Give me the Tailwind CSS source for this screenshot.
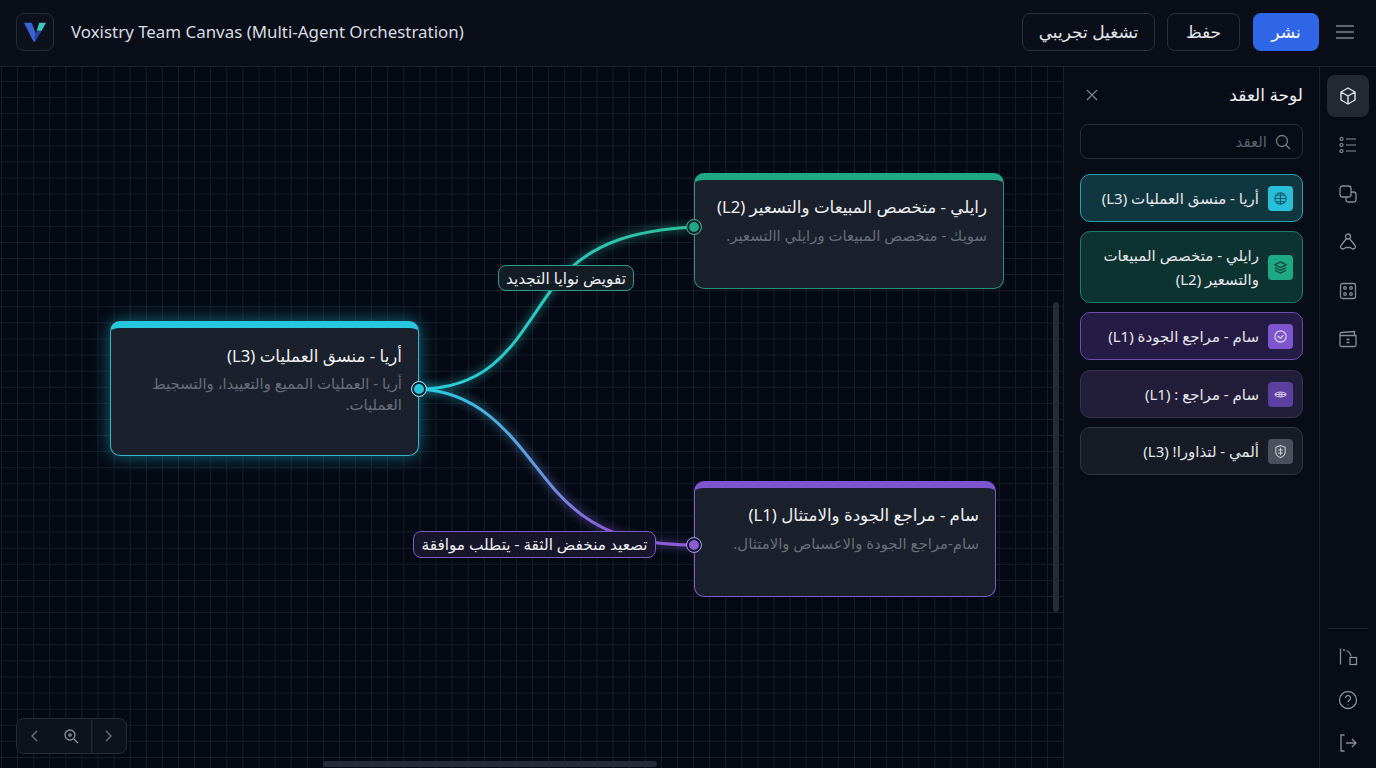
<!DOCTYPE html>
<html lang="ar">
<head>
  <meta charset="UTF-8">
  <meta name="viewport" content="width=device-width, initial-scale=1">
  <title>Voxistry Team Canvas</title>
  <script src="https://cdn.jsdelivr.net/npm/@tailwindcss/browser@4"></script>
</head>
<body class="h-[768px] w-[1376px] overflow-hidden bg-[#060a14] font-['Noto_Sans','DejaVu_Sans',sans-serif] text-[#e6e9ee]">

  <!-- top bar -->
  <header class="flex h-[67px] items-center border-b border-[#1c222d] bg-[#0a0e18] pb-[3px] pl-4 pr-[22px]">
    <div class="flex h-[38px] w-[38px] items-center justify-center rounded-lg border border-[#252b37] bg-[#0c111c]">
      <svg width="22" height="20" viewBox="0 0 22 20">
        <path d="M0 .7H7.600L13 14.500 11 19.700H9.500Z" fill="#3b63d8"/>
        <path d="M12.700 9H17.700L11 19.700 10.600 14.500Z" fill="#2f3f9f"/>
        <path d="M15.300 .7H22L17.700 8.700H12.700Z" fill="#3cc8c0"/>
      </svg>
    </div>
    <h1 class="ml-[17px] text-[16.900px] text-[#d8dce3]">Voxistry Team Canvas (Multi-Agent Orchestration)</h1>
    <div class="ml-auto flex items-center text-[17px]" dir="ltr">
      <button dir="rtl" class="h-[38px] w-[133px] rounded-lg border border-[#2a303b] text-[#e3e6eb]">تشغيل تجريبي</button>
      <button dir="rtl" class="ml-3 h-[38px] w-[73px] rounded-lg border border-[#2a303b] text-[#e3e6eb]">حفظ</button>
      <button dir="rtl" class="ml-[13px] h-[38px] w-[66px] rounded-lg bg-[#2f66e8] text-white">نشر</button>
      <svg class="ml-[17px]" width="18" height="14" viewBox="0 0 18 14" fill="none" stroke="#7b828e" stroke-width="1.300">
        <path d="M0 1h18M0 7h18M0 13h18"/>
      </svg>
    </div>
  </header>

  <div class="flex h-[701px]">
    <!-- canvas -->
    <main class="relative w-[1063px] overflow-hidden bg-[#050913] bg-[linear-gradient(#151e2a_1px,transparent_1px),linear-gradient(90deg,#151e2a_1px,transparent_1px)] bg-[size:16.100px_16.100px] bg-[position:1px_14px]">
      <svg class="absolute inset-0" width="1063" height="701" viewBox="0 67 1063 701" fill="none">
        <defs>
          <linearGradient id="edgeTop" gradientUnits="userSpaceOnUse" x1="419" y1="389" x2="694" y2="227">
            <stop offset="0" stop-color="#27cfe0"/>
            <stop offset="1" stop-color="#2fc09a"/>
          </linearGradient>
          <linearGradient id="edgeBottom" gradientUnits="userSpaceOnUse" x1="419" y1="389" x2="694" y2="545">
            <stop offset="0" stop-color="#27cfe0"/>
            <stop offset=".5" stop-color="#6f8fe0"/>
            <stop offset=".75" stop-color="#8b5cd6"/>
          </linearGradient>
          <filter id="glow" x="-20%" y="-20%" width="140%" height="140%">
            <feGaussianBlur stdDeviation="5"/>
          </filter>
        </defs>
        <path d="M419 389C500 389 520 330 555 285 590 240 640 230 694 227" stroke="url(#edgeTop)" stroke-width="5" opacity=".5" filter="url(#glow)"/>
        <path d="M419 389C490 392 520 450 555 490 590 530 630 545 694 545" stroke="url(#edgeBottom)" stroke-width="5" opacity=".5" filter="url(#glow)"/>
        <path d="M419 389C500 389 520 330 555 285 590 240 640 230 694 227" stroke="url(#edgeTop)" stroke-width="3"/>
        <path d="M419 389C490 392 520 450 555 490 590 530 630 545 694 545" stroke="url(#edgeBottom)" stroke-width="3"/>
      </svg>

      <!-- node: Aria -->
      <article dir="rtl" class="absolute left-[110px] top-[254px] h-[135px] w-[309px] rounded-[10px] border border-[#35b6c8] border-t-[7px] border-t-[#27c8dd] bg-[#1a202c] py-[16px] pl-4 pr-4 shadow-[0_0_18px_#1fb6cf90]">
        <h2 class="text-[16.700px] leading-6 text-[#eef0f3]">أريا - منسق العمليات (L3)</h2>
        <p class="mt-[5px] text-[14.900px] leading-[21px] text-[#686e79]">أريا - العمليات المميع والتعييدا، والتسجيط العمليات.</p>
      </article>
      <span class="absolute left-[411px] top-[314px] h-4 w-4 rounded-full border-[1.500px] border-[#8fdde9] bg-[#27c8dd] shadow-[inset_0_0_0_2px_#0b1a24]"></span>

      <!-- node: Riley -->
      <article dir="rtl" class="absolute left-[694px] top-[106px] h-[116px] w-[310px] rounded-[10px] border border-[#2b8f78] border-t-[7px] border-t-[#1ea883] bg-[#1a202c] pb-[14px] pl-4 pr-4 pt-[15px]">
        <h2 class="text-[16.700px] leading-6 text-[#eef0f3]">رايلي - متخصص المبيعات والتسعير (L2)</h2>
        <p class="mt-[6px] text-[14.900px] leading-[21px] text-[#686e79]">سويك - متخصص المبيعات ورايلي االتسعير.</p>
      </article>
      <span class="absolute left-[686px] top-[152px] h-4 w-4 rounded-full border-[1.500px] border-[#4aa68e] bg-[#1ea883] shadow-[inset_0_0_0_2px_#0b1a24]"></span>

      <!-- node: Sam -->
      <article dir="rtl" class="absolute left-[694px] top-[414px] h-[116px] w-[302px] rounded-[10px] border border-[#7a5cc4] border-t-[7px] border-t-[#7d55cf] bg-[#1a202c] pb-[14px] pl-4 pr-4 pt-[15px]">
        <h2 class="text-[16.700px] leading-6 text-[#eef0f3]">سام - مراجع الجودة والامتثال (L1)</h2>
        <p class="mt-[6px] text-[14.900px] leading-[21px] text-[#686e79]">سام-مراجع الجودة والاعسباص والامتثال.</p>
      </article>
      <span class="absolute left-[686px] top-[470px] h-4 w-4 rounded-full border-[1.500px] border-[#a78be0] bg-[#8b5cd6] shadow-[inset_0_0_0_2px_#0b1a24]"></span>

      <!-- edge labels -->
      <span dir="rtl" class="absolute left-[498px] top-[198px] flex h-[26px] w-[136px] items-center justify-center rounded-lg border border-[#2f9c87] bg-[#141c26] text-[15.300px] text-[#eef0f3]">تفويض نوايا التجديد</span>
      <span dir="rtl" class="absolute left-[413px] top-[464px] flex h-[27px] w-[243px] items-center justify-center rounded-lg border border-[#7a5cc4] bg-[#17152a] text-[15.300px] text-[#eef0f3]">تصعيد منخفض الثقة - يتطلب موافقة</span>

      <!-- zoom control -->
      <div class="absolute bottom-[14px] left-4 flex h-9 w-[111px] items-center rounded-lg border border-[#252b37] bg-[#0d121c]">
        <div class="flex w-[74px] items-center justify-between pl-3 pr-3">
          <svg width="10" height="12" viewBox="0 0 10 12" fill="none" stroke="#6f7681" stroke-width="1.300"><path d="M8 1L3 6l5 5"/></svg>
          <svg width="16" height="16" viewBox="0 0 16 16" fill="none" stroke="#8b919b" stroke-width="1.300"><circle cx="7" cy="7" r="5"/><circle cx="7" cy="7" r="1.200"/><path d="M11 11l4 4"/></svg>
        </div>
        <div class="flex h-full flex-1 items-center justify-center border-l border-[#252b37]">
          <svg width="10" height="12" viewBox="0 0 10 12" fill="none" stroke="#6f7681" stroke-width="1.300"><path d="M2 1l5 5-5 5"/></svg>
        </div>
      </div>

      <!-- scrollbars -->
      <div class="absolute left-[1053px] top-[235px] h-[310px] w-[6px] rounded-full bg-[#262c37]"></div>
      <div class="absolute left-[323px] top-[694px] h-[6px] w-[334px] rounded-full bg-[#262c37]"></div>
    </main>

    <!-- node palette -->
    <aside class="w-[256px] border-l border-[#1c222d] bg-[#080c16] pl-4 pr-4" dir="rtl">
      <div class="flex h-[56px] items-center justify-between">
        <h2 class="text-[17px] text-[#eef0f3]">لوحة العقد</h2>
        <svg class="ml-[6px]" width="12" height="12" viewBox="0 0 12 12" fill="none" stroke="#7b828e" stroke-width="1.300"><path d="M1 1l10 10M11 1L1 11"/></svg>
      </div>
      <div class="mt-px flex h-[35px] items-center gap-2 rounded-lg border border-[#252b37] pr-[11px] text-[15px] text-[#5c626d]">
        <svg width="16" height="16" viewBox="0 0 16 16" fill="none" stroke="#767c87" stroke-width="1.300"><circle cx="7" cy="7" r="5.500"/><path d="M11 11l4 4"/></svg>
        <span>العقد</span>
      </div>
      <ul class="mt-[15px] flex flex-col gap-[9px] text-[15px] leading-[24px] text-[#e3e6eb]">
        <li class="flex h-12 items-center gap-[9px] rounded-[10px] border border-[#2f9fb0] bg-[#10363f] px-[9px]">
          <span class="flex h-[25px] w-[25px] shrink-0 items-center justify-center rounded bg-[#27c0d8]">
            <svg width="15" height="15" viewBox="0 0 16 16" fill="none" stroke="#0f5a68" stroke-width="1.200"><circle cx="8" cy="8" r="6"/><path d="M2 8h12M8 2v12M4 4.500h8M4 11.500h8"/></svg>
          </span>
          <span>أريا - منسق العمليات (L3)</span>
        </li>
        <li class="flex h-[72px] items-center gap-[9px] rounded-[10px] border border-[#227a65] bg-[#0d3330] px-[9px]">
          <span class="flex h-[25px] w-[25px] shrink-0 items-center justify-center rounded bg-[#1ea883]">
            <svg width="15" height="15" viewBox="0 0 16 16" fill="none" stroke="#0b3e33" stroke-width="1.300"><path d="M8 2l6 3-6 3-6-3zM2 8l6 3 6-3M2 11l6 3 6-3"/></svg>
          </span>
          <span>رايلي - متخصص المبيعات والتسعير (L2)</span>
        </li>
        <li class="flex h-12 items-center gap-[9px] rounded-[10px] border border-[#6b4fb0] bg-[#261b44] px-[9px]">
          <span class="flex h-[25px] w-[25px] shrink-0 items-center justify-center rounded bg-[#7d55cf]">
            <svg width="15" height="15" viewBox="0 0 16 16" fill="none" stroke="#e0d5f5" stroke-width="1.200"><circle cx="8" cy="8" r="6"/><path d="M5 7.500l3 2.500 3-3.500"/></svg>
          </span>
          <span>سام - مراجع الجودة (L1)</span>
        </li>
        <li class="mt-px flex h-12 items-center gap-[9px] rounded-[10px] border border-[#3a3350] bg-[#221d38] px-[9px]">
          <span class="flex h-[25px] w-[25px] shrink-0 items-center justify-center rounded bg-[#5c3f9e]">
            <svg width="15" height="15" viewBox="0 0 16 16" fill="none" stroke="#cfc4e8" stroke-width="1.100"><path d="M2 8c2-3.500 10-3.500 12 0-2 3.500-10 3.500-12 0zM2 8h12"/><circle cx="8" cy="8" r="1.800"/></svg>
          </span>
          <span>سام - مراجع : (L1)</span>
        </li>
        <li class="flex h-12 items-center gap-[9px] rounded-[10px] border border-[#303640] bg-[#161b25] px-[9px]">
          <span class="flex h-[25px] w-[25px] shrink-0 items-center justify-center rounded bg-[#4b515c]">
            <svg width="15" height="15" viewBox="0 0 16 16" fill="none" stroke="#c9ced6" stroke-width="1.100"><path d="M8 1.500l5 2v5c0 3-2.500 5-5 6-2.500-1-5-3-5-6v-5zM8 4v8M5.500 6.500h5M5.500 9.500h5"/></svg>
          </span>
          <span>ألمي - لتذاورا! (L3)</span>
        </li>
      </ul>
    </aside>

    <!-- icon rail -->
    <nav class="flex w-[57px] flex-col items-center border-l border-[#1c222d] bg-[#080c16] pb-[15px] pt-2 text-[#878d97]">
      <div class="flex h-[42px] w-[42px] items-center justify-center rounded-lg bg-[#232833] text-[#e3e6eb]">
        <svg width="20" height="20" viewBox="0 0 20 20" fill="none" stroke="currentColor" stroke-width="1.400" stroke-linejoin="round"><path d="M10 2l7 4v8l-7 4-7-4V6zM3 6l7 4 7-4M10 10v8"/></svg>
      </div>
      <div class="mt-[18px] flex flex-col items-center gap-[28.500px]">
        <svg width="20" height="20" viewBox="0 0 20 20" fill="none" stroke="currentColor" stroke-width="1.200"><circle cx="3.500" cy="4" r="1.500"/><circle cx="3.500" cy="10" r="1.500"/><circle cx="3.500" cy="16" r="1.500"/><path d="M8 4h10M8 10h10M8 16h10"/></svg>
        <svg width="20" height="20" viewBox="0 0 20 20" fill="none" stroke="currentColor" stroke-width="1.300"><rect x="2" y="2" width="11" height="11" rx="2.500"/><path d="M13 8h2.500A2.500 2.500 0 0 1 18 10.500v5a2.500 2.500 0 0 1-2.500 2.500h-5A2.500 2.500 0 0 1 8 15.500V13"/></svg>
        <svg width="20" height="20" viewBox="0 0 20 20" fill="none" stroke="currentColor" stroke-width="1.300"><circle cx="10" cy="4.500" r="2.500"/><path d="M8.500 6.500L3 13.500a2.200 2.200 0 0 0 2 3.500c1.500 0 2-1 3-1.500h4c1 .5 1.500 1.500 3 1.500a2.200 2.200 0 0 0 2-3.500L11.500 6.500"/></svg>
        <svg width="20" height="20" viewBox="0 0 20 20" fill="none" stroke="currentColor" stroke-width="1.300"><rect x="2.500" y="2.500" width="15" height="15" rx="2"/><circle cx="7" cy="7" r="1.300"/><circle cx="13" cy="7" r="1.300"/><circle cx="7" cy="13" r="1.300"/><circle cx="13" cy="13" r="1.300"/></svg>
        <svg width="20" height="20" viewBox="0 0 20 20" fill="none" stroke="currentColor" stroke-width="1.300"><path d="M2 6.500V16a1.500 1.500 0 0 0 1.500 1.500h13A1.500 1.500 0 0 0 18 16V6.500zM2 6.500V5A1.500 1.500 0 0 1 3.500 3.500L16.500 2.500V6.500M8.500 10.500h3M8.500 13.500h3"/></svg>
      </div>
      <div class="mt-auto flex flex-col items-center gap-[23px]">
        <div class="-mb-[5px] h-px w-10 bg-[#1f2530]"></div>
        <svg width="20" height="20" viewBox="0 0 20 20" fill="none" stroke="currentColor" stroke-width="1.300"><path d="M2.500 1.500v16M5 3h2M8.500 3.500c2.500 1 4 3 4.500 6"/><rect x="12" y="10.500" width="6.500" height="7"/></svg>
        <svg width="20" height="20" viewBox="0 0 20 20" fill="none" stroke="currentColor" stroke-width="1.300"><circle cx="10" cy="10" r="8.500"/><path d="M7.500 8a2.500 2.500 0 1 1 3.800 2.100c-.9.600-1.300 1-1.300 2.100M10 14.500v.8"/></svg>
        <svg width="20" height="20" viewBox="0 0 20 20" fill="none" stroke="currentColor" stroke-width="1.300"><path d="M6.500 2H3v16h3.500M8 10h10M14 6l4 4-4 4"/></svg>
      </div>
    </nav>
  </div>
</body>
</html>
